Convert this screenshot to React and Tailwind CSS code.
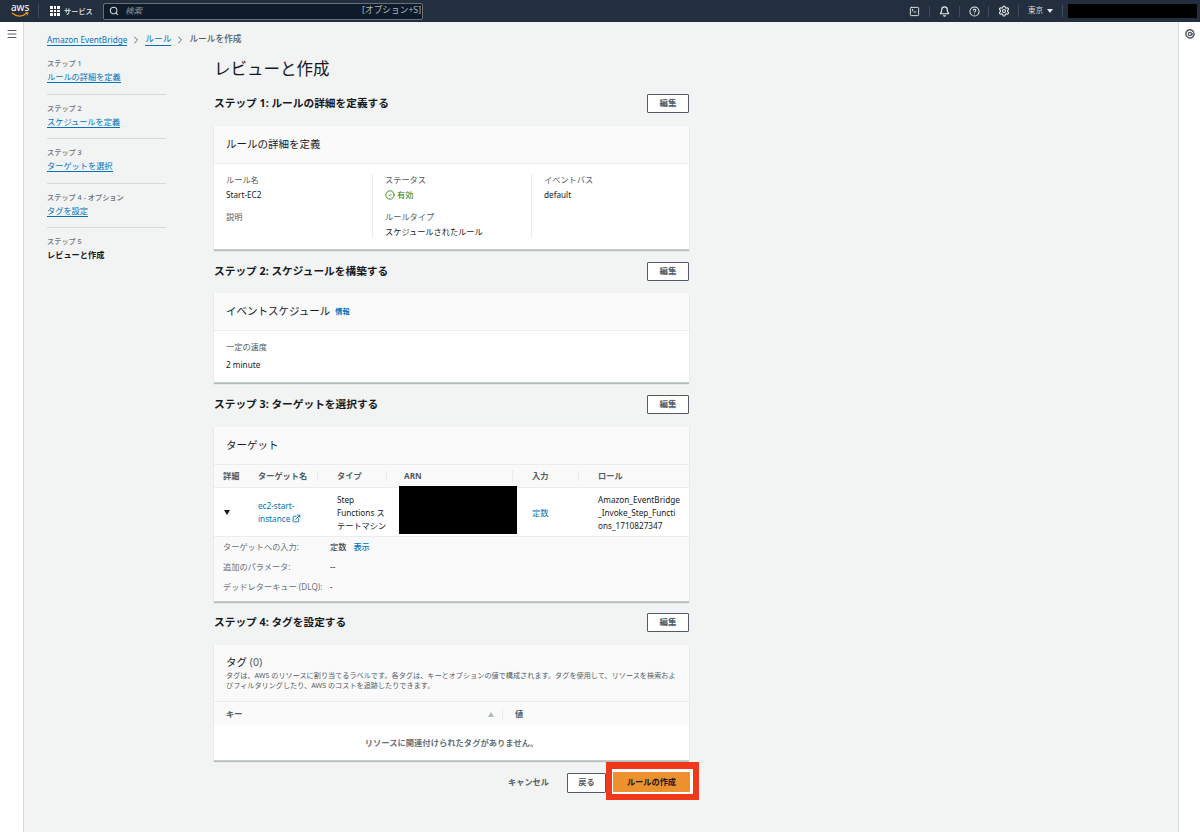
import React from 'react';
import { Bell, ChevronRight, CircleCheck, CircleHelp, ExternalLink, Menu, Search, Settings, SquareTerminal } from 'lucide-react';

const steps = [
  { label: 'ステップ 1', title: 'ルールの詳細を定義' },
  { label: 'ステップ 2', title: 'スケジュールを定義' },
  { label: 'ステップ 3', title: 'ターゲットを選択' },
  { label: 'ステップ 4 - オプション', title: 'タグを設定' },
  { label: 'ステップ 5', title: 'レビューと作成', current: true },
];

function TopNav() {
  return (
    <header className="h-[22px] bg-[#232f3e] flex items-center text-white shrink-0">
      <div className="w-[39px] pl-[11px] border-r border-[#414d5c] h-[14px] flex flex-col items-start leading-none">
        <span className="w-[18px] text-center text-[10px] leading-[9px] -mt-[1px]">aws</span>
        <svg width="18" height="6" viewBox="0 0 19 6">
          <path d="M1 1c5 4 11 4 16 0" fill="none" stroke="#f90" strokeWidth="1.4" />
          <path d="M15 0.5l3 0-1 3" fill="none" stroke="#f90" strokeWidth="1" />
        </svg>
      </div>
      <div className="ml-[11px] w-[10px] h-[10px] grid grid-cols-3 gap-[1px]">
        {Array.from({ length: 9 }).map((_, i) => (
          <span key={i} className="bg-white" />
        ))}
      </div>
      <span className="ml-[4px] w-[39px] text-[7.2px] font-medium text-[#eaeded]">サービス</span>
      <div className="w-[320px] h-[17px] bg-[#0f1b2a] border border-[#687078] rounded-[2px] flex items-center pl-[5px] pr-[1px]">
        <Search size={10} strokeWidth={2.5} className="text-[#d5dbdb]" />
        <span className="ml-[6px] text-[8.5px] italic text-[#879596]">検索</span>
        <span className="ml-auto text-[8.7px] text-[#aab7b8]">[オプション+S]</span>
      </div>
      <div className="ml-auto flex items-center h-[14px]">
        <div className="w-[30px] flex justify-center border-r border-[#414d5c]">
          <SquareTerminal size={11} className="text-[#eaeded]" />
        </div>
        <div className="w-[30px] flex justify-center border-r border-[#414d5c]">
          <Bell size={11} strokeWidth={2.5} className="text-[#eaeded]" />
        </div>
        <div className="w-[29px] flex justify-center border-r border-[#414d5c]">
          <CircleHelp size={11} strokeWidth={2.2} className="text-[#eaeded]" />
        </div>
        <div className="w-[30px] flex justify-center border-r border-[#414d5c]">
          <Settings size={12} strokeWidth={2.2} className="text-[#eaeded]" />
        </div>
        <div className="w-[44px] flex items-center justify-center gap-[4px] border-r border-[#414d5c] text-[7.5px] text-[#d5dbdb]">
          東京
          <span className="w-0 h-0 border-x-[3px] border-x-transparent border-t-[4px] border-t-[#eaeded]" />
        </div>
        <div className="ml-[5px] mr-[3px] w-[129px] h-[14px] bg-black" />
      </div>
    </header>
  );
}

function Breadcrumb() {
  return (
    <nav className="flex items-center text-[8.7px] h-[12px]">
      <a className="text-[8.2px] text-[#0073bb] border-b border-[#0073bb] leading-[11px]">Amazon EventBridge</a>
      <ChevronRight size={12} strokeWidth={1.8} className="mx-[3px] text-[#545b64]" />
      <a className="text-[#0073bb] border-b border-[#0073bb] leading-[11px]">ルール</a>
      <ChevronRight size={12} strokeWidth={1.8} className="mx-[3px] text-[#545b64]" />
      <span className="text-[#545b64] font-medium">ルールを作成</span>
    </nav>
  );
}

function StepList() {
  return (
    <ol className="w-[119px] shrink-0">
      {steps.map((s, i) => (
        <li key={s.label} className={`h-[44.5px] pt-[8px] ${i < steps.length - 1 ? 'border-b border-[#d5dbdb]' : ''}`}>
          <div className="text-[7.2px] leading-[10px] text-[#687078] font-medium">{s.label}</div>
          {s.current ? (
            <div className="text-[8.2px] leading-[11px] font-bold text-[#16191f] mt-[3px]">{s.title}</div>
          ) : (
            <a className="block w-fit text-[8.2px] leading-[10px] text-[#0073bb] border-b border-[#0073bb] mt-[4px]">{s.title}</a>
          )}
        </li>
      ))}
    </ol>
  );
}

function StepHeader({ title, mt }) {
  return (
    <div className={`flex items-center justify-between h-[19px] ${mt}`}>
      <h2 className="text-[10.7px] font-bold text-[#16191f]">{title}</h2>
      <button className="w-[42px] h-[19px] bg-white border border-[#545b64] rounded-[1px] text-[8.5px] font-bold text-[#545b64]">編集</button>
    </div>
  );
}

function Card({ children, mt }) {
  return (
    <section className={`bg-white border-b-[1.5px] border-[#c5cccc] shadow-[0_1px_1px_rgba(0,28,36,0.25)] ${mt}`}>
      {children}
    </section>
  );
}

function CardHeader({ children }) {
  return (
    <div className="h-[38px] bg-[#fafafa] border-b border-[#eaeded] pl-[12px] flex items-center text-[10.5px] text-[#16191f]">
      {children}
    </div>
  );
}

function Field({ label, children, className = '' }) {
  return (
    <div className={className}>
      <div className="text-[8.2px] leading-[12px] text-[#545b64]">{label}</div>
      <div className="text-[8.2px] leading-[12px] mt-[3px] text-[#16191f]">{children}</div>
    </div>
  );
}

function TargetsTable() {
  return (
    <div className="text-[8.2px]">
      <div className="grid grid-cols-[35px_79px_67px_128px_66px_100px] h-[23px] items-center bg-[#fafafa] border-b border-[#eaeded] font-bold text-[#545b64]">
        <div className="pl-[9px]">詳細</div>
        <div className="pl-[9px] w-[69px] h-[12px] flex items-center border-r border-[#eaeded]">ターゲット名</div>
        <div className="pl-[9px] w-[59px] h-[12px] flex items-center border-r border-[#eaeded]">タイプ</div>
        <div className="pl-[9px] w-[118px] h-[12px] flex items-center border-r border-[#eaeded]">ARN</div>
        <div className="pl-[9px] w-[56px] h-[12px] flex items-center border-r border-[#eaeded]">入力</div>
        <div className="pl-[9px]">ロール</div>
      </div>
      <div className="grid grid-cols-[35px_79px_67px_128px_66px_100px] h-[49px] items-center text-[#16191f] border-b border-[#eaeded] leading-[13px]">
        <div className="pl-[10px]">
          <span className="block w-0 h-0 border-x-[3px] border-x-transparent border-t-[5px] border-t-[#16191f]" />
        </div>
        <div className="pl-[9px] text-[#0073bb]">
          ec2-start-
          <br />
          instance <ExternalLink size={9} strokeWidth={2.4} className="inline -mt-[2px]" />
        </div>
        <div className="pl-[9px] whitespace-nowrap">
          Step
          <br />
          Functions ス
          <br />
          テートマシン
        </div>
        <div className="pl-[4px] h-[49px] -mt-[4px]">
          <div className="w-[118px] h-[48px] bg-black" />
        </div>
        <div className="pl-[9px] text-[#0073bb]">定数</div>
        <div className="pl-[9px] whitespace-nowrap">
          Amazon_EventBridge
          <br />
          _Invoke_Step_Functi
          <br />
          ons_1710827347
        </div>
      </div>
      <div className="bg-[#fafafa] px-[9px] h-[64px] text-[#687078] leading-[20px]">
        <div className="flex">
          <span className="w-[107px]">ターゲットへの入力:</span>
          <span className="text-[#16191f]">定数</span>
          <a className="ml-[7px] text-[#0073bb] font-medium">表示</a>
        </div>
        <div className="flex">
          <span className="w-[107px]">追加のパラメータ:</span>
          <span className="text-[#16191f]">--</span>
        </div>
        <div className="flex">
          <span className="w-[107px]">デッドレターキュー (DLQ):</span>
          <span className="text-[#16191f]">-</span>
        </div>
      </div>
    </div>
  );
}

export default function App() {
  return (
    <div className="w-[1200px] h-[832px] overflow-hidden flex flex-col bg-[#f2f3f3] font-['Noto_Sans','Noto_Sans_CJK_JP',sans-serif]">
      <TopNav />
      <div className="flex flex-1 min-h-0">
        <aside className="w-[24px] bg-white border-r border-[#d5dbdb] shrink-0 pt-[6px] flex justify-center">
          <Menu size={12} strokeWidth={2} className="text-[#545b64]" />
        </aside>
        <main className="flex-1 pl-[23px] pt-[12px]">
          <Breadcrumb />
          <div className="flex mt-[4px]">
            <StepList />
            <div className="w-[475px] ml-[48px] mt-[6px]">
              <h1 className="text-[16.5px] leading-[26px] text-[#16191f]">レビューと作成</h1>
              <StepHeader title="ステップ 1: ルールの詳細を定義する" mt="mt-[12px]" />
              <Card mt="mt-[13px]">
                <CardHeader>ルールの詳細を定義</CardHeader>
                <div className="h-[85px] pt-[10px]">
                  <div className="grid grid-cols-[158px_159px_158px] h-[64px]">
                    <div className="pl-[12px]">
                      <Field label="ルール名">Start-EC2</Field>
                      <Field label="説明" className="mt-[10px]" />
                    </div>
                    <div className="pl-[12px] border-l border-[#eaeded]">
                      <Field label="ステータス">
                        <span className="flex items-center gap-[2px] text-[#1d8102]">
                          <CircleCheck size={10} strokeWidth={2} />
                          有効
                        </span>
                      </Field>
                      <Field label="ルールタイプ" className="mt-[10px]">スケジュールされたルール</Field>
                    </div>
                    <div className="pl-[12px] border-l border-[#eaeded]">
                      <Field label="イベントバス">default</Field>
                    </div>
                  </div>
                </div>
              </Card>
              <StepHeader title="ステップ 2: スケジュールを構築する" mt="mt-[12px]" />
              <Card mt="mt-[12px]">
                <CardHeader>
                  イベントスケジュール
                  <a className="ml-[5px] text-[7.2px] font-bold text-[#0073bb]">情報</a>
                </CardHeader>
                <div className="pl-[12px] pt-[10px] h-[51px]">
                  <div className="text-[8.2px] leading-[12px] text-[#545b64]">一定の速度</div>
                  <div className="text-[8.2px] leading-[12px] mt-[6px] text-[#16191f]">2 minute</div>
                </div>
              </Card>
              <StepHeader title="ステップ 3: ターゲットを選択する" mt="mt-[12px]" />
              <Card mt="mt-[13px]">
                <CardHeader>ターゲット</CardHeader>
                <TargetsTable />
              </Card>
              <StepHeader title="ステップ 4: タグを設定する" mt="mt-[11px]" />
              <Card mt="mt-[13px]">
                <div className="h-[57px] bg-[#fafafa] border-b border-[#eaeded] px-[12px] pt-[10px]">
                  <div className="text-[10.5px] leading-[14px] text-[#16191f]">
                    タグ <span className="text-[#545b64]">(0)</span>
                  </div>
                  <p className="text-[7.15px] leading-[10px] text-[#545b64] mt-[1px]">
                    タグは、AWS のリソースに割り当てるラベルです。各タグは、キーとオプションの値で構成されます。タグを使用して、リソースを検索およびフィルタリングしたり、AWS のコストを追跡したりできます。
                  </p>
                </div>
                <div className="flex h-[24px] items-center bg-[#fafafa] text-[8.2px] font-bold text-[#545b64]">
                  <div className="w-[289px] pl-[12px] pr-[8px] flex items-center justify-between border-r border-[#eaeded] h-[12px]">
                    キー
                    <span className="w-0 h-0 border-x-[3.5px] border-x-transparent border-b-[5px] border-b-[#aab7b8]" />
                  </div>
                  <div className="pl-[12px]">値</div>
                </div>
                <div className="h-[34px] flex items-center justify-center text-[8.3px] font-bold text-[#687078]">
                  リソースに関連付けられたタグがありません。
                </div>
              </Card>
              <div className="flex items-center justify-end -mr-[10px] mt-[1px]">
                <button className="mt-[3px] text-[8.2px] font-bold text-[#545b64] mr-[18px]">キャンセル</button>
                <button className="mt-[3px] w-[39px] h-[20px] bg-white border border-[#545b64] rounded-[1px] text-[8.2px] font-bold text-[#545b64]">戻る</button>
                <div className="border-x-[6px] border-t-[7px] border-b-[6px] border-[#f0391b] bg-white pl-[1px] pr-[3px] pt-[3px] pb-[2px]">
                  <button className="block w-[77px] h-[20px] bg-[#ec912d] rounded-[1px] text-[8.2px] font-bold text-[#16191f]">ルールの作成</button>
                </div>
              </div>
            </div>
          </div>
        </main>
        <aside className="w-[22px] bg-white border-l border-[#d5dbdb] shrink-0 pt-[7px] flex justify-center">
          <svg width="10" height="10" viewBox="0 0 10 10" fill="none" stroke="#545b64" strokeWidth="1.4">
            <path d="M8.9 3.8A4.1 4.1 0 1 0 9 5.4" />
            <circle cx="5" cy="5" r="1.6" />
            <path d="M6.5 5H10" />
          </svg>
        </aside>
      </div>
    </div>
  );
}
